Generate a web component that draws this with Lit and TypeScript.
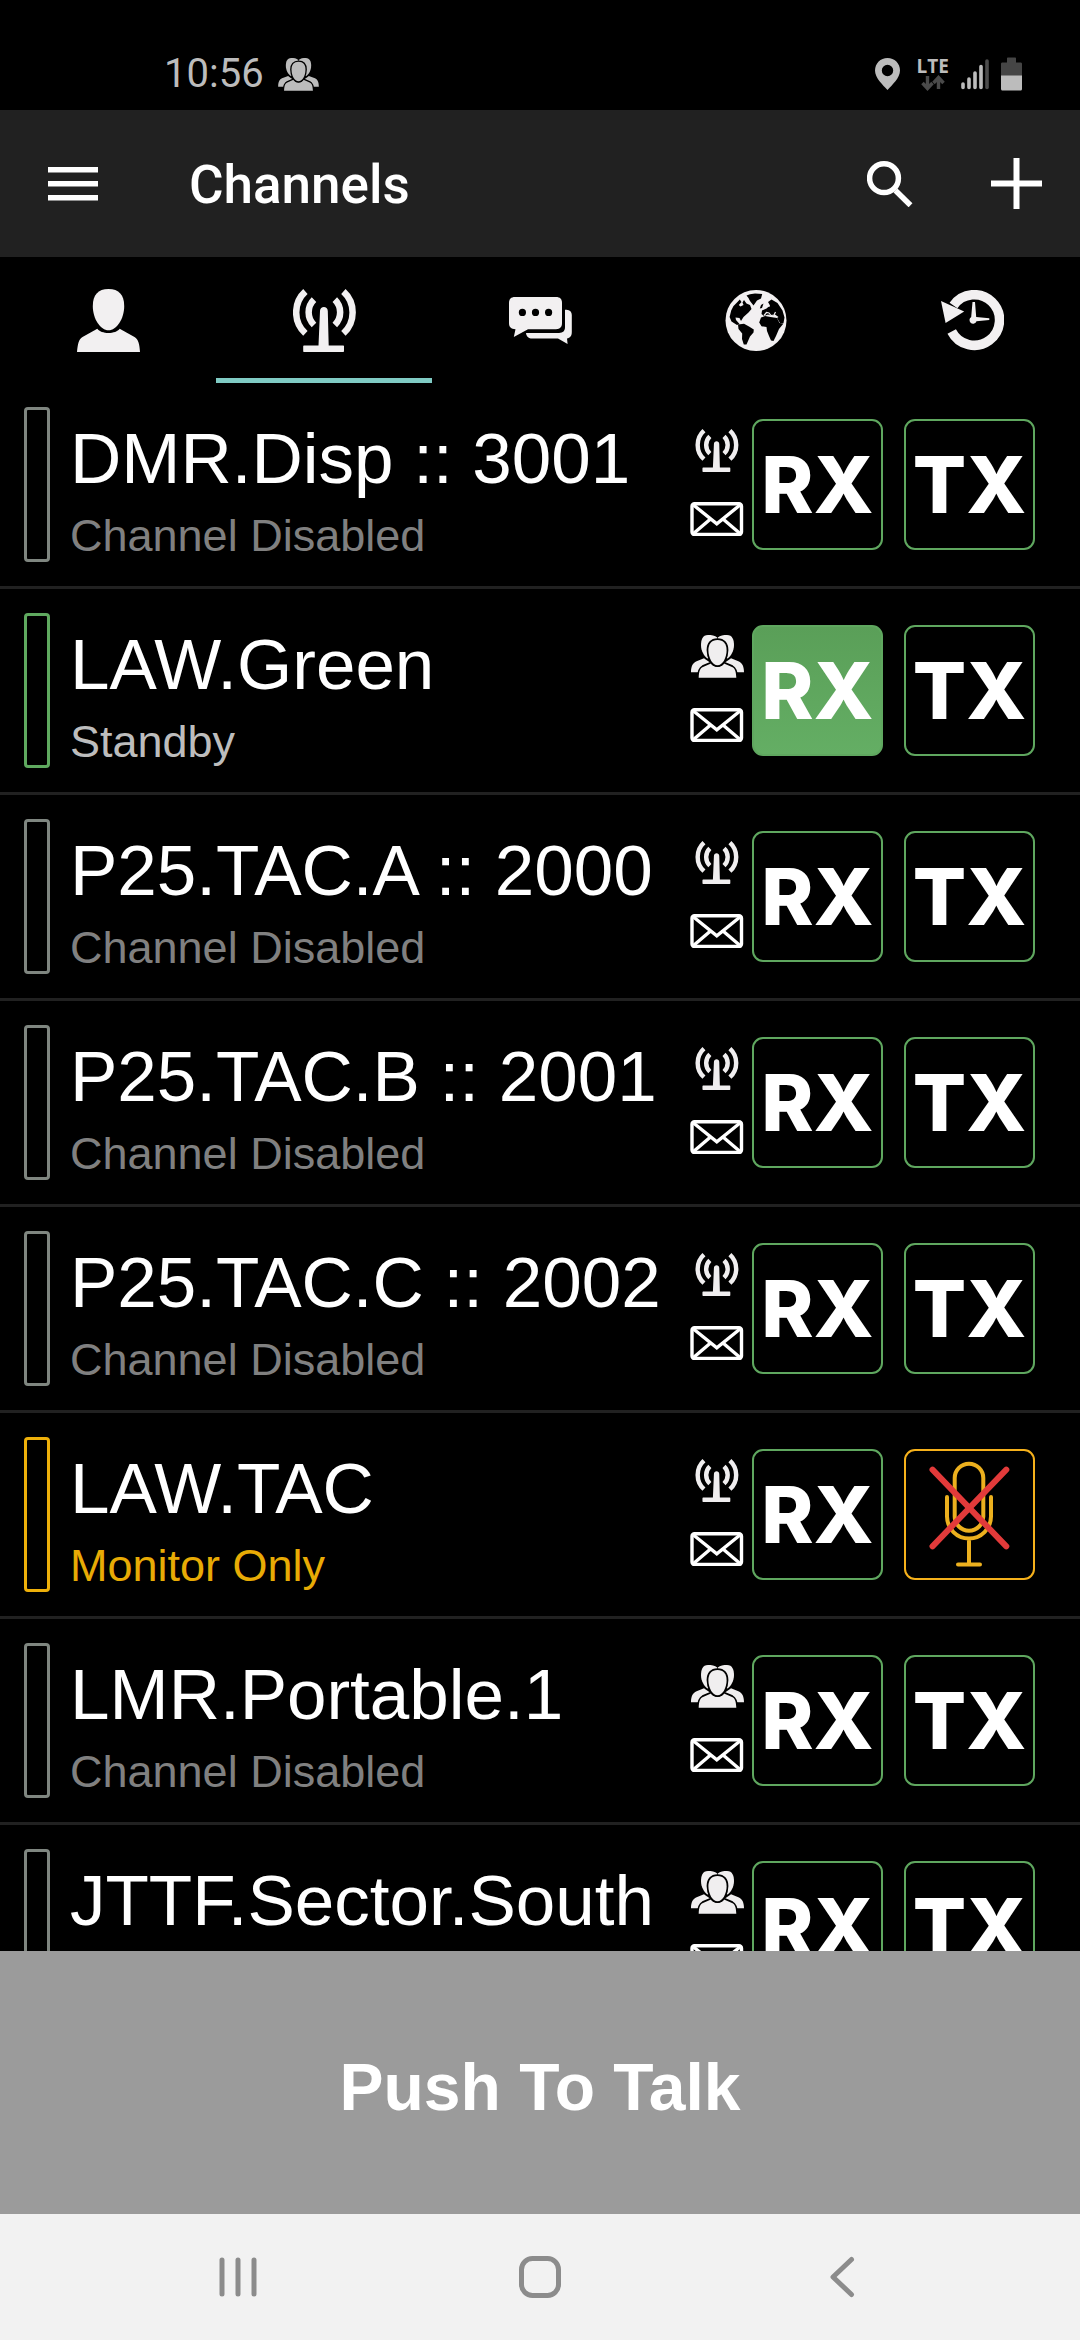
import { LitElement, html, css, svg, nothing } from "lit";
import { customElement, property, state } from "lit/decorators.js";
import { classMap } from "lit/directives/class-map.js";

type Kind = "radio" | "group";
type Status = "disabled" | "standby" | "monitor";

interface Channel {
  name: string;
  kind: Kind;
  status: Status;
  receiving?: boolean;
}

const STATUS_TEXT: Record<Status, string> = {
  disabled: "Channel Disabled",
  standby: "Standby",
  monitor: "Monitor Only",
};

const CHANNELS: Channel[] = [
  { name: "DMR.Disp :: 3001", kind: "radio", status: "disabled" },
  { name: "LAW.Green", kind: "group", status: "standby", receiving: true },
  { name: "P25.TAC.A :: 2000", kind: "radio", status: "disabled" },
  { name: "P25.TAC.B :: 2001", kind: "radio", status: "disabled" },
  { name: "P25.TAC.C :: 2002", kind: "radio", status: "disabled" },
  { name: "LAW.TAC", kind: "radio", status: "monitor" },
  { name: "LMR.Portable.1", kind: "group", status: "disabled" },
  { name: "JTTF.Sector.South", kind: "group", status: "disabled" },
];

const icon = (w: number, h: number, body: unknown, vw = w, vh = h, vx = 0, vy = 0) => html`
  <svg width=${w} height=${h} viewBox="${vx} ${vy} ${vw} ${vh}" fill="currentColor" aria-hidden="true">${body}</svg>
`;

const mastShape = svg`
  <g fill="none" stroke="currentColor" stroke-width="6.5">
    <path d="M12.4 2.5A28.3 28.3 0 0 0 12.4 44.3M50.4 2.5A28.3 28.3 0 0 1 50.4 44.3"/>
    <path d="M21 10.7A17.6 17.6 0 0 0 21 36M41.8 10.7A17.6 17.6 0 0 1 41.8 36"/>
  </g>
  <path d="M27 22C27 16.8 34.8 16.8 34.8 22L35.7 56.4H50C50.7 56.4 51 56.8 51 57.4V62C51 62.7 50.6 63 50 63H11.2C10.5 63 10.2 62.6 10.2 62V57.4C10.2 56.8 10.6 56.4 11.2 56.4H25.5Z"/>`;

const groupShape = svg`
  <path d="M17 0C11.5 0 10 5 10 10C10 16 13 21 16.5 23.5L26.2 20V2.6C24 .4 20.5 0 17 0Z"/>
  <path d="M36 0C41.5 0 43 5 43 10C43 16 40 21 36.5 23.5L26.8 20V2.6C29 .4 32.5 0 36 0Z"/>
  <path d="M0 37.3C0 31 2 28 5 26.5L13 23.3C15 25 18 27 20 28V37.3ZM53 37.3C53 31 51 28 48 26.5L40 23.3C38 25 35 27 33 28V37.3Z"/>
  <g stroke="#000" stroke-width="3.6" paint-order="stroke">
    <path d="M7.7 42.8C8 36 9 33.5 12 32L20 28.5C22 32.7 31 32.7 33 28.5L41 32C44 33.5 45 36 45.3 42.8Z"/>
    <path d="M26.5 5C32.5 5 35.6 9 35.6 15C35.6 23 31.5 30.3 26.5 30.3C21.5 30.3 17.4 23 17.4 15C17.4 9 20.5 5 26.5 5Z"/>
  </g>`;

const userShape = svg`
  <path d="M31.5 0C42 0 47.2 6 47.2 17C47.2 30 39.5 41.3 31.5 41.3S15.800 30 15.8 17C15.8 6 21 0 31.5 0Z"/>
  <path d="M0 63C.8 55 1.5 50.5 5.5 48L20.3 39.7C24 45.3 39 45.3 42.7 39.7L57.5 48C61.5 50.5 62.5 55 63 63Z"/>`;

const chatShape = svg`
  <path fill-rule="evenodd" d="M6 0H47C51 0 53 2 53 6V26C53 30 51 32 47 32.2H19L4.8 40L6.5 32.2C2 32.2 0 30 0 26V6C0 2 2 0 6 0ZM13.4 11.8A3.6 3.6 0 1 0 13.4 19A3.6 3.6 0 1 0 13.4 11.8ZM26.5 11.8A3.6 3.6 0 1 0 26.5 19A3.6 3.6 0 1 0 26.5 11.8ZM39.6 11.8A3.6 3.6 0 1 0 39.6 19A3.6 3.6 0 1 0 39.6 11.8Z"/>
  <path d="M56 12.7H57.5C61 12.9 62.8 15 62.8 18V35C62.8 39 61 41 58 41.5L58.6 47L49 41.5H23C20 41.5 17.5 40 17 36H50C54 35.8 56 34 56 30Z"/>`;

const globeShape = svg`
  <circle cx="31" cy="30.5" r="30.5"/>
  <g fill="#000">
    <path d="M14.8 9.5L11.5 13L8.5 16L6.2 20.5L4.6 27L6.5 31.5L12 35L14.5 34L11 30L10.5 27.5L14.5 28L16 31L18.5 27L23.5 22.5L26.5 19L25 15L21.5 13.5L19 10L17.5 12.5L18.5 15L15.5 16.5L13.8 15L16.5 12Z"/>
    <path d="M21.5 5.5L25 4.3L30 3.4L37.2 4L36 8.5L32 10.5L28.5 15.5L25 11L23.5 8Z"/>
    <path d="M13 34.5L19 33.7L24 36.5L28.8 39.5L28.5 42.5L25 46.5L21.5 54.5L18.8 54.5L17 49L17.2 43.5L13.5 39Z"/>
    <path d="M36 27.5L40 26L45.5 27L52 28L54.5 33L58.5 33.5L54 39L51 46L48.5 51L46 50.5L44 46L42 41L41.5 37L36.5 36.3L34.2 32.5Z"/>
    <path d="M46.5 9.5L52.5 13L57.5 20.5L59.5 27.5L58.5 33L55 33L52 28L53.5 27L50 24.5L47 26L43 24.5L39 26L36.5 24L37 20.5L41.5 18.5L45 15.5L43 12Z"/>
    <path d="M38.5 13.5L37 18L34.8 18.5L36 15Z"/>
  </g>
  <path d="M39 25.5L41.5 22.5L44 23L46 25.5L49 25L50.5 22M40 16.5L45 16" fill="none" stroke="currentColor" stroke-width="1.2"/>`;

const historyShape = svg`
  <path d="M12.5 15.5A25.3 25.3 0 1 1 10.7 41.5" fill="none" stroke="currentColor" stroke-width="9.5"/>
  <path d="M0 11L4.6 33L23.2 21.5Z"/>
  <path d="M31.5 12H34L35.2 27L48.3 28.3V30L35.5 31.2A3.6 3.6 0 1 1 30.2 27Z"/>`;

const mailShape = svg`
  <g fill="none" stroke="currentColor" stroke-width="3.4" stroke-linejoin="round">
    <rect x="2" y="1.7" width="49.5" height="30.8" rx="2.5"/>
    <path stroke-linejoin="miter" d="M3.5 3L26.8 21.8L50 3M20.5 17L3.5 31.5M33 17L50 31.5"/>
  </g>`;

const mutedMicShape = svg`
  <g fill="none" stroke-linecap="round" stroke="#ecb01e" stroke-width="4">
    <rect x="50.7" y="14.7" width="28.6" height="67" rx="14.3"/>
    <path d="M43 48V67.5A22 22 0 0 0 87 67.5V48M65 90V115.5M54 115.5H76"/>
  </g>
  <path d="M28.5 20.7L102.3 97.3M102.3 20.7L28.5 97.3" stroke="#e23a3a" stroke-width="6" stroke-linecap="round"/>`;

@customElement("channel-row")
class ChannelRow extends LitElement {
  @property({ attribute: false }) channel!: Channel;
  @state() private rx?: boolean;

  static styles = css`
    :host {
      display: block;
    }
    .row {
      display: flex;
      align-items: center;
      padding: 24px 45px 24px 24px;
      border-bottom: 3px solid #212121;
    }
    .bar {
      box-sizing: border-box;
      flex: none;
      align-self: stretch;
      width: 26px;
      border: 3px solid #7f8680;
      border-radius: 4px;
    }
    .standby .bar {
      border-color: #5fa95f;
    }
    .monitor .bar {
      border-color: #eeb00a;
    }
    .label {
      flex: 1;
      min-width: 0;
      padding: 12px 0 1px 20px;
      white-space: nowrap;
    }
    .name {
      margin: 0 0 12px;
      font-size: 71px;
      font-weight: 400;
      line-height: 80px;
      color: #fff;
    }
    .status {
      margin: 0;
      font-size: 45px;
      line-height: 50px;
      color: #808080;
    }
    .standby .status {
      color: #bdbdbd;
    }
    .monitor .status {
      color: #e8ab05;
    }
    .kinds {
      display: flex;
      flex-direction: column;
      align-items: center;
      gap: 30px;
      width: 54px;
      margin-right: 8px;
      padding-bottom: 4px;
      color: #f0eeef;
    }
    button {
      box-sizing: border-box;
      display: flex;
      align-items: center;
      justify-content: center;
      margin: 0;
      padding: 0;
      border: 0;
      background: none;
      color: #fff;
      font: inherit;
    }
    .keys {
      display: flex;
      gap: 21px;
    }
    .key {
      width: 131px;
      height: 131px;
      border: 2px solid #5fa75f;
      border-radius: 11px;
      font: 800 79px/127px Inter, "Liberation Sans", sans-serif;
    }
    .key.on {
      background: linear-gradient(#5a9f58, #64ae64);
    }
    .key.muted {
      border-color: #f6b11b;
    }
    svg {
      display: block;
    }
  `;

  render() {
    const c = this.channel;
    const on = this.rx ?? !!c.receiving;
    const muted = c.status === "monitor";
    return html`
      <div class="row ${c.status}">
        <span class="bar"></span>
        <div class="label">
          <h2 class="name">${c.name}</h2>
          <p class="status">${STATUS_TEXT[c.status]}</p>
        </div>
        <div class="kinds">
          ${c.kind === "radio" ? icon(44, 43, mastShape, 63, 63) : icon(53, 43, groupShape)}
          <button aria-label="Messages for ${c.name}">${icon(54, 34, mailShape)}</button>
        </div>
        <div class="keys">
          <button
            class=${classMap({ key: true, on })}
            aria-pressed=${on ? "true" : "false"}
            @click=${() => (this.rx = !on)}
          >RX</button>
          <button class=${classMap({ key: true, muted })} aria-label=${muted ? "Transmit muted" : nothing}>
            ${muted ? icon(127, 127, mutedMicShape, 127, 127, 2, 2) : "TX"}
          </button>
        </div>
      </div>
    `;
  }
}

@customElement("app-root")
class AppRoot extends LitElement {
  @state() private tab = 1;

  private tabs = [
    { label: "Contacts", art: icon(63, 63, userShape) },
    { label: "Channels", art: icon(63, 63, mastShape) },
    { label: "Messages", art: icon(63, 47, chatShape) },
    { label: "Map", art: icon(63, 61, globeShape) },
    { label: "History", art: icon(63, 61, historyShape) },
  ];

  static styles = css`
    :host {
      display: flex;
      flex-direction: column;
      height: 100vh;
      overflow: hidden;
      background: #000;
      color: #fff;
      font-family: "Liberation Sans", Arial, sans-serif;
    }
    svg {
      display: block;
      flex: none;
    }
    button {
      display: flex;
      align-items: center;
      justify-content: center;
      margin: 0;
      padding: 0;
      border: 0;
      background: none;
      color: inherit;
      font: inherit;
    }
    .system {
      flex: none;
      display: flex;
      align-items: center;
      justify-content: space-between;
      padding: 51px 58px 13px 164px;
      color: #bcbcbc;
    }
    .clock,
    .signals {
      display: flex;
      align-items: center;
      gap: 14px;
    }
    .signals {
      gap: 12px;
    }
    .time {
      font: 400 40px/46px Roboto, sans-serif;
    }
    .lte {
      display: flex;
      flex-direction: column;
      align-items: center;
      margin-left: 5px;
      font: 700 19px/18px "Open Sans", sans-serif;
    }
    .bar {
      flex: none;
      display: flex;
      align-items: center;
      padding: 42px 38px 42px 48px;
      background: #212121;
    }
    .title {
      flex: 1;
      margin: 0 0 0 91px;
      padding-top: 3px;
      font: 500 53px/60px Roboto, sans-serif;
    }
    .actions {
      display: flex;
      align-items: center;
      gap: 78px;
    }
    .tabs {
      flex: none;
      display: grid;
      grid-template-columns: repeat(5, 1fr);
      color: #f2f0f1;
    }
    .tab {
      height: 126px;
      border-top: 5px solid transparent;
      border-bottom: 5px solid transparent;
      box-sizing: border-box;
    }
    .tab.current {
      border-bottom-color: #80cbc4;
    }
    .list {
      flex: 1;
      min-height: 0;
      margin: 0;
      padding: 0;
      overflow: hidden;
      list-style: none;
    }
    .talk {
      flex: none;
      padding: 96px 0 87px;
      background: #9b9b9b;
      font-size: 66px;
      font-weight: 700;
      line-height: 80px;
    }
    .nav {
      flex: none;
      display: grid;
      grid-template-columns: repeat(3, 1fr);
      padding: 42px 8%;
      background: #f2f2f2;
      color: #8c8c8c;
    }
  `;

  render() {
    return html`
      <header class="system">
        <div class="clock">
          <span class="time">10:56</span>
          ${icon(41, 33, groupShape, 53, 43)}
        </div>
        <div class="signals">
          ${icon(25, 32, svg`<path fill-rule="evenodd" d="M12.5 0C19.5 0 25 5.3 25 12.5C25 20 17 27 12.5 32C8 27 0 20 0 12.5C0 5.3 5.5 0 12.5 0ZM12.5 6.8A5.7 5.7 0 1 0 12.5 18.2A5.7 5.7 0 1 0 12.5 6.8Z"/>`)}
          <span class="lte">LTE
            ${icon(24, 16, svg`<g fill="none" stroke="#4a4a4a" stroke-width="3.4"><path d="M6.5 1V13M1.5 8L6.5 13.5L11.5 8M17.5 14V3M12.5 8L17.5 2.5L22.5 8"/></g>`)}
          </span>
          ${icon(28, 32, svg`<g stroke="currentColor" stroke-width="3.6" stroke-linecap="round"><path d="M2 26V29.5M8 21V29.5M14 15V29.5M20 8.5V29.5"/><path stroke="#4c4c4c" d="M26 3V29.5"/></g>`)}
          ${icon(21, 34, svg`<path fill="#454545" d="M6 1.5C6 .8 6.5 .5 7 .5H14C14.6 .5 15 .8 15 1.5V5.5H19.5C20.5 5.5 21 6 21 7V19H0V7C0 6 .5 5.5 1.5 5.5H6Z"/><path d="M0 18.5H21V31.5C21 33 20.5 33.5 19.5 33.5H1.5C.5 33.5 0 33 0 31.5Z"/>`)}
        </div>
      </header>

      <div class="bar">
        <button aria-label="Menu">${icon(50, 34, svg`<path d="M0 0H50V5.5H0ZM0 14H50V19.5H0ZM0 28H50V33.5H0Z"/>`)}</button>
        <h1 class="title">Channels</h1>
        <div class="actions">
          <button aria-label="Search">${icon(46, 46, svg`<g fill="none" stroke="currentColor" stroke-width="5.5"><circle cx="17" cy="17.2" r="14.4"/><path d="M28.5 29.5L43.5 44.3"/></g>`)}</button>
          <button aria-label="Add channel">${icon(51, 51, svg`<path d="M22.5 0H28.5V22.5H51V28.5H28.5V51H22.5V28.5H0V22.5H22.5Z"/>`)}</button>
        </div>
      </div>

      <div class="tabs" role="tablist">
        ${this.tabs.map(
          (t, i) => html`<button
            role="tab"
            class=${classMap({ tab: true, current: i === this.tab })}
            aria-label=${t.label}
            aria-selected=${i === this.tab ? "true" : "false"}
            @click=${() => (this.tab = i)}
          >${t.art}</button>`
        )}
      </div>

      <ul class="list">
        ${CHANNELS.map((c) => html`<li><channel-row .channel=${c}></channel-row></li>`)}
      </ul>

      <button class="talk">Push To Talk</button>

      <nav class="nav">
        <button aria-label="Recent apps">${icon(42, 42, svg`<path d="M5 4V38M21 4V38M37 4V38" stroke="currentColor" stroke-width="5" stroke-linecap="round"/>`)}</button>
        <button aria-label="Home">${icon(42, 42, svg`<rect x="2.5" y="2.5" width="37" height="37" rx="11" fill="none" stroke="currentColor" stroke-width="5"/>`)}</button>
        <button aria-label="Back">${icon(42, 42, svg`<path d="M30.5 3.5L12 21L30.5 38.5" fill="none" stroke="currentColor" stroke-width="5" stroke-linecap="round" stroke-linejoin="round"/>`)}</button>
      </nav>
    `;
  }
}
